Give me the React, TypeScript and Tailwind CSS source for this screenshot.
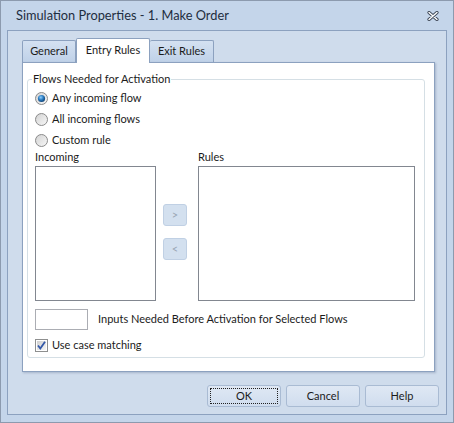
import type { ReactNode } from "react";

const font = { fontFamily: 'Lato, "Noto Sans", sans-serif' };

const Radio = ({ checked = false, label }: { checked?: boolean; label: string }) => (
  <div className="flex h-[21px] items-center gap-[4px]">
    <svg width="13" height="13" viewBox="0 0 13 13">
      <defs>
        <linearGradient id="rbg" x1="0" y1="0" x2="1" y2="1">
          <stop offset="0" stopColor="#d2d2d2" />
          <stop offset="1" stopColor="#f8f8f8" />
        </linearGradient>
        <radialGradient id="rdot" cx="0.4" cy="0.35" r="0.7">
          <stop offset="0" stopColor="#8fd0ff" />
          <stop offset="0.5" stopColor="#2b7bc0" />
          <stop offset="1" stopColor="#0c3c6c" />
        </radialGradient>
      </defs>
      <circle cx="6.5" cy="6.5" r="6" fill="url(#rbg)" stroke="#8b8b8b" />
      {checked && <circle cx="6.5" cy="6.5" r="3.6" fill="url(#rdot)" />}
    </svg>
    <span>{label}</span>
  </div>
);

const SmallBtn = ({ children }: { children: ReactNode }) => (
  <div className="flex h-[22px] w-[24px] items-center justify-center rounded-[3px] border border-[#c0d0e4] bg-[#d3e0ef] text-[11px] text-[#9aa6b4]">
    {children}
  </div>
);

const DlgBtn = ({ children, focus = false }: { children: ReactNode; focus?: boolean }) => (
  <div className="flex h-[22px] w-[74px] items-center justify-center rounded-[3px] border border-[#a9bbd3] bg-gradient-to-b from-[#dfe8f4] to-[#d0ddee] p-[2px]">
    <div
      className={
        focus
          ? "flex h-full w-full items-center justify-center border border-dotted border-[#222]"
          : "flex h-full w-full items-center justify-center"
      }
    >
      {children}
    </div>
  </div>
);

export default function App() {
  return (
    <div
      style={font}
      className="flex h-[423px] w-[454px] flex-col border border-[#8c9aae] bg-[#c4d5ea] text-[11px] text-[#1b1b1b]"
    >
      {/* title bar */}
      <div className="flex h-[29px] items-center justify-between pl-[15px] pr-[14px]">
        <span className="text-[12.8px] text-[#1e2d40]">Simulation Properties - 1. Make Order</span>
        <svg width="12" height="10" viewBox="0 0 12 10">
          <path d="M2 1.5 L10 8.5 M10 1.5 L2 8.5" stroke="#3c4656" strokeWidth="3.2" strokeLinecap="round" />
          <path d="M2 1.5 L10 8.5 M10 1.5 L2 8.5" stroke="#ffffff" strokeWidth="1.4" strokeLinecap="round" />
        </svg>
      </div>

      {/* client */}
      <div className="mx-[6px] mb-[7px] flex flex-1 flex-col border border-[#8ca1bf] bg-[#cfdcec]">
        {/* tabs */}
        <div className="ml-[14px] mt-[7px] flex h-[24px] items-end">
          <div className="flex h-[22px] w-[54px] items-center justify-center rounded-t-[2px] border border-b-0 border-[#8ca1bf] bg-gradient-to-b from-[#d4e1f1] to-[#bfd1e8]">
            General
          </div>
          <div className="relative z-10 -mb-px flex h-[25px] w-[74px] items-center justify-center rounded-t-[2px] border border-b-0 border-[#8ca1bf] bg-white pb-[2px]">
            Entry Rules
          </div>
          <div className="flex h-[22px] w-[64px] items-center justify-center rounded-t-[2px] border border-b-0 border-l-0 border-[#8ca1bf] bg-gradient-to-b from-[#d4e1f1] to-[#bfd1e8]">
            Exit Rules
          </div>
        </div>

        {/* tab panel */}
        <div className="ml-[14px] mr-[11px] flex h-[310px] flex-col border border-[#8ca1bf] bg-white pb-[13px] pl-[4px] pr-[9px] pt-[16px] shadow-[1px_1px_2px_rgba(90,110,140,0.35)]">
          <div className="relative flex flex-1 flex-col rounded-[3px] border border-[#d5dfe5] pl-[7px] pr-[9px] pt-[8px]">
            <span className="absolute -top-[9px] left-[4px] bg-white px-[1px] leading-[16px]">
              Flows Needed for Activation
            </span>
            <Radio checked label="Any incoming flow" />
            <Radio label="All incoming flows" />
            <Radio label="Custom rule" />

            <div className="flex h-[12px] items-center">
              <span className="w-[163px]">Incoming</span>
              <span>Rules</span>
            </div>

            <div className="mt-[3px] flex h-[135px]">
              <div className="w-[121px] border border-[#828790] bg-white" />
              <div className="ml-[7px] flex w-[24px] flex-col gap-[12px] pt-[38px]">
                <SmallBtn>&gt;</SmallBtn>
                <SmallBtn>&lt;</SmallBtn>
              </div>
              <div className="ml-[11px] flex-1 border border-[#828790] bg-white" />
            </div>

            <div className="mt-[8px] flex h-[21px] items-center">
              <div className="h-[21px] w-[53px] border border-[#abadb3] bg-white" />
              <span className="ml-[10px]">Inputs Needed Before Activation for Selected Flows</span>
            </div>

            <div className="mt-[6px] flex h-[18px] items-center gap-[4px]">
              <svg width="13" height="13" viewBox="0 0 13 13">
                <defs>
                  <linearGradient id="cbg" x1="0" y1="0" x2="1" y2="1">
                    <stop offset="0" stopColor="#cfcfcf" />
                    <stop offset="1" stopColor="#f6f6f6" />
                  </linearGradient>
                </defs>
                <rect x="0.5" y="0.5" width="12" height="12" fill="#fff" stroke="#8e8f8f" />
                <rect x="2" y="2" width="9" height="9" fill="url(#cbg)" />
                <path d="M3 6.5 L5.3 9.5 L10 2.8" fill="none" stroke="#3358a8" strokeWidth="1.8" />
              </svg>
              <span>Use case matching</span>
            </div>
          </div>
        </div>

        {/* dialog buttons */}
        <div className="mr-[7px] mt-[13px] flex justify-end gap-[5px]">
          <DlgBtn focus>OK</DlgBtn>
          <DlgBtn>Cancel</DlgBtn>
          <DlgBtn>Help</DlgBtn>
        </div>
      </div>
    </div>
  );
}
